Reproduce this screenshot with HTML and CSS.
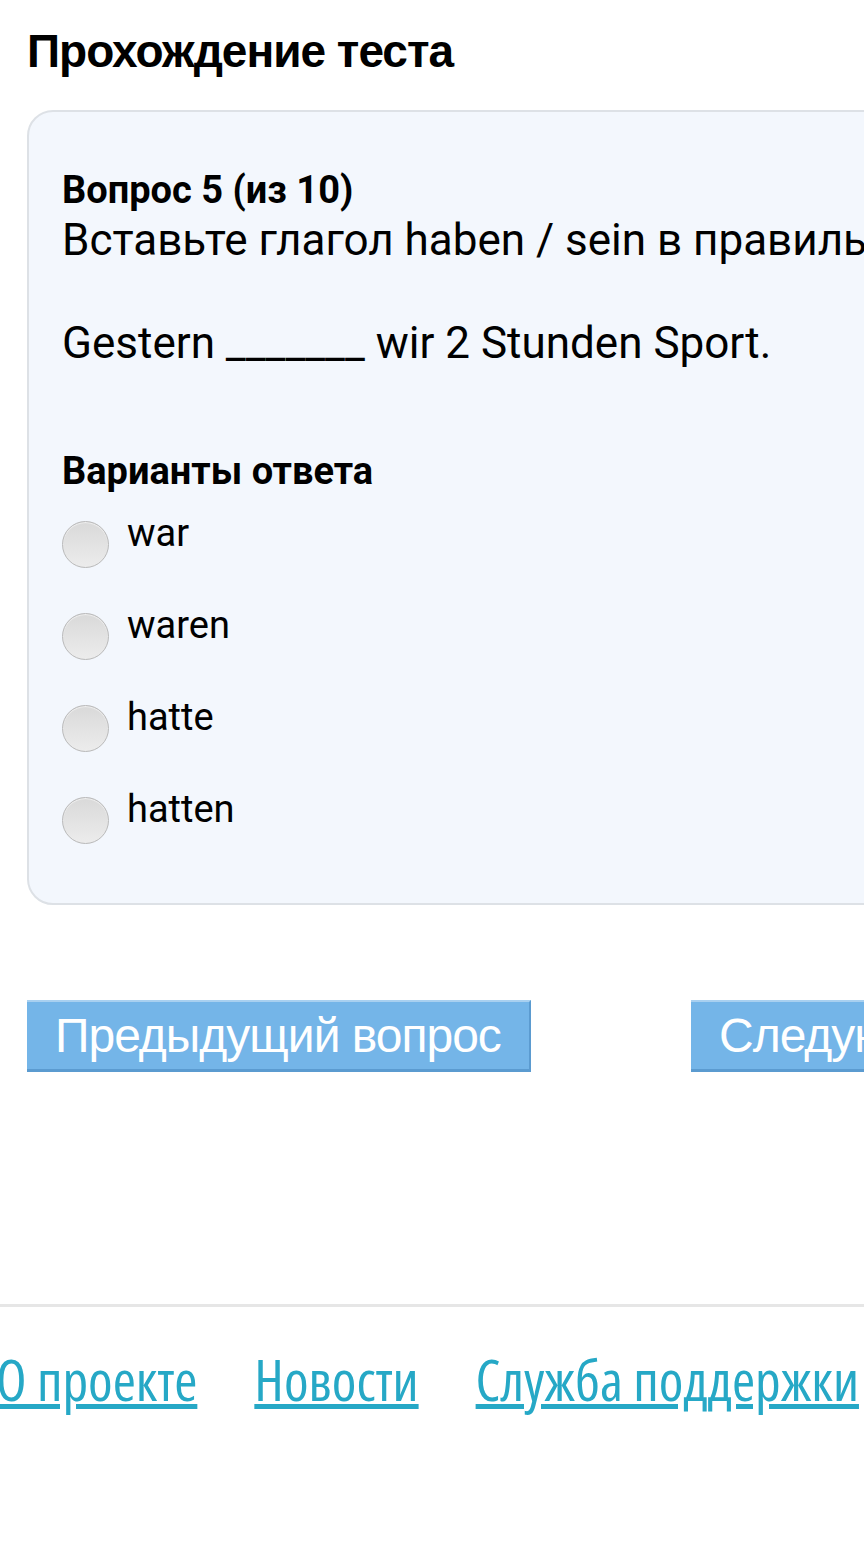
FILE: index.html
```html
<!DOCTYPE html>
<html lang="ru">
<head>
    <meta charset="UTF-8">
    <meta name="viewport" content="width=device-width, initial-scale=1.0">
    <title>Прохождение теста</title>
    <link rel="stylesheet" href="styles.css">
</head>
<body>
    <div class="page">
        <h1 class="page-title">Прохождение теста</h1>

        <div class="question-card">
            <div class="question-number">Вопрос 5 (из 10)</div>
            <div class="question-text">
                Вставьте глагол haben / sein в правильной форме.<br><br>
                Gestern _______ wir 2 Stunden Sport.
            </div>

            <div class="answers-title">Варианты ответа</div>
            <form class="answers">
                <label class="answer"><input type="radio" name="answer" value="1"><span>war</span></label>
                <label class="answer"><input type="radio" name="answer" value="2"><span>waren</span></label>
                <label class="answer"><input type="radio" name="answer" value="3"><span>hatte</span></label>
                <label class="answer"><input type="radio" name="answer" value="4"><span>hatten</span></label>
            </form>
        </div>

        <div class="nav-buttons">
            <button type="button" class="nav-btn">Предыдущий вопрос</button>
            <button type="button" class="nav-btn">Следующий вопрос</button>
        </div>
    </div>

    <div class="footer">
        <div class="footer-links">
            <a href="#">О проекте</a>
            <a href="#">Новости</a>
            <a href="#">Служба поддержки</a>
        </div>
    </div>
</body>
</html>
```

FILE: styles.css
```css
html, body {
    overflow-x: hidden;
}
body {
    margin: 0;
    background-color: #fff;
    font-family: Roboto, "Noto Sans", sans-serif;
    color: #000;
}
.page {
    width: 1300px;
    padding: 0 0 0 27px;
}
.page-title {
    font-family: "Liberation Sans", Arial, sans-serif;
    font-weight: bold;
    font-size: 46px;
    letter-spacing: -1px;
    margin: 0;
    padding-top: 24px;
    line-height: 54px;
}
.question-card {
    margin-top: 32px;
    background-color: #f3f7fd;
    border: 2px solid #dde1e6;
    border-radius: 26px;
    padding: 58px 33px 59px;
}
.question-number {
    font-weight: bold;
    font-size: 38px;
    line-height: 40px;
}
.question-text {
    margin-top: 5px;
    font-size: 44px;
    line-height: 51.5px;
    white-space: nowrap;
}
.answers-title {
    margin-top: 80px;
    font-weight: bold;
    font-size: 38px;
    line-height: 42px;
}
.answers {
    display: flex;
    flex-direction: column;
    gap: 35px;
    margin-top: 19px;
}
.answer {
    display: flex;
    align-items: flex-start;
    gap: 18px;
    font-size: 38px;
    line-height: 44px;
}
.answer input {
    appearance: none;
    -webkit-appearance: none;
    margin: 10px 0 0;
    width: 47px;
    height: 47px;
    border-radius: 50%;
    border: 1px solid #b9b9b9;
    background: linear-gradient(#d9d9d9, #ececec);
    box-shadow: inset 0 1px 1px rgba(255, 255, 255, 0.6);
}
.nav-buttons {
    display: flex;
    gap: 160px;
    margin-top: 95px;
}
.nav-btn {
    font-family: "Liberation Sans", Arial, sans-serif;
    font-size: 48px;
    letter-spacing: -1px;
    color: #fff;
    background-color: #74b5e8;
    border: none;
    border-top: 2px solid #a8d0f0;
    border-bottom: 3px solid #5b9bd0;
    border-right: 2px solid #5b9bd0;
    padding: 0 28px;
    height: 72px;
    width: 504px;
    text-align: left;
    white-space: nowrap;
    cursor: pointer;
}
.footer {
    margin-top: 232px;
    border-top: 3px solid #e6e6e6;
    padding-top: 42px;
    padding-bottom: 160px;
}
.footer-links {
    display: flex;
    gap: 57px;
    margin-left: -4px;
    white-space: nowrap;
}
.footer-links a {
    font-family: "Open Sans", sans-serif;
    font-stretch: 75%;
    font-size: 56px;
    line-height: 60px;
    color: #26a8c6;
    text-decoration: underline;
}
```
